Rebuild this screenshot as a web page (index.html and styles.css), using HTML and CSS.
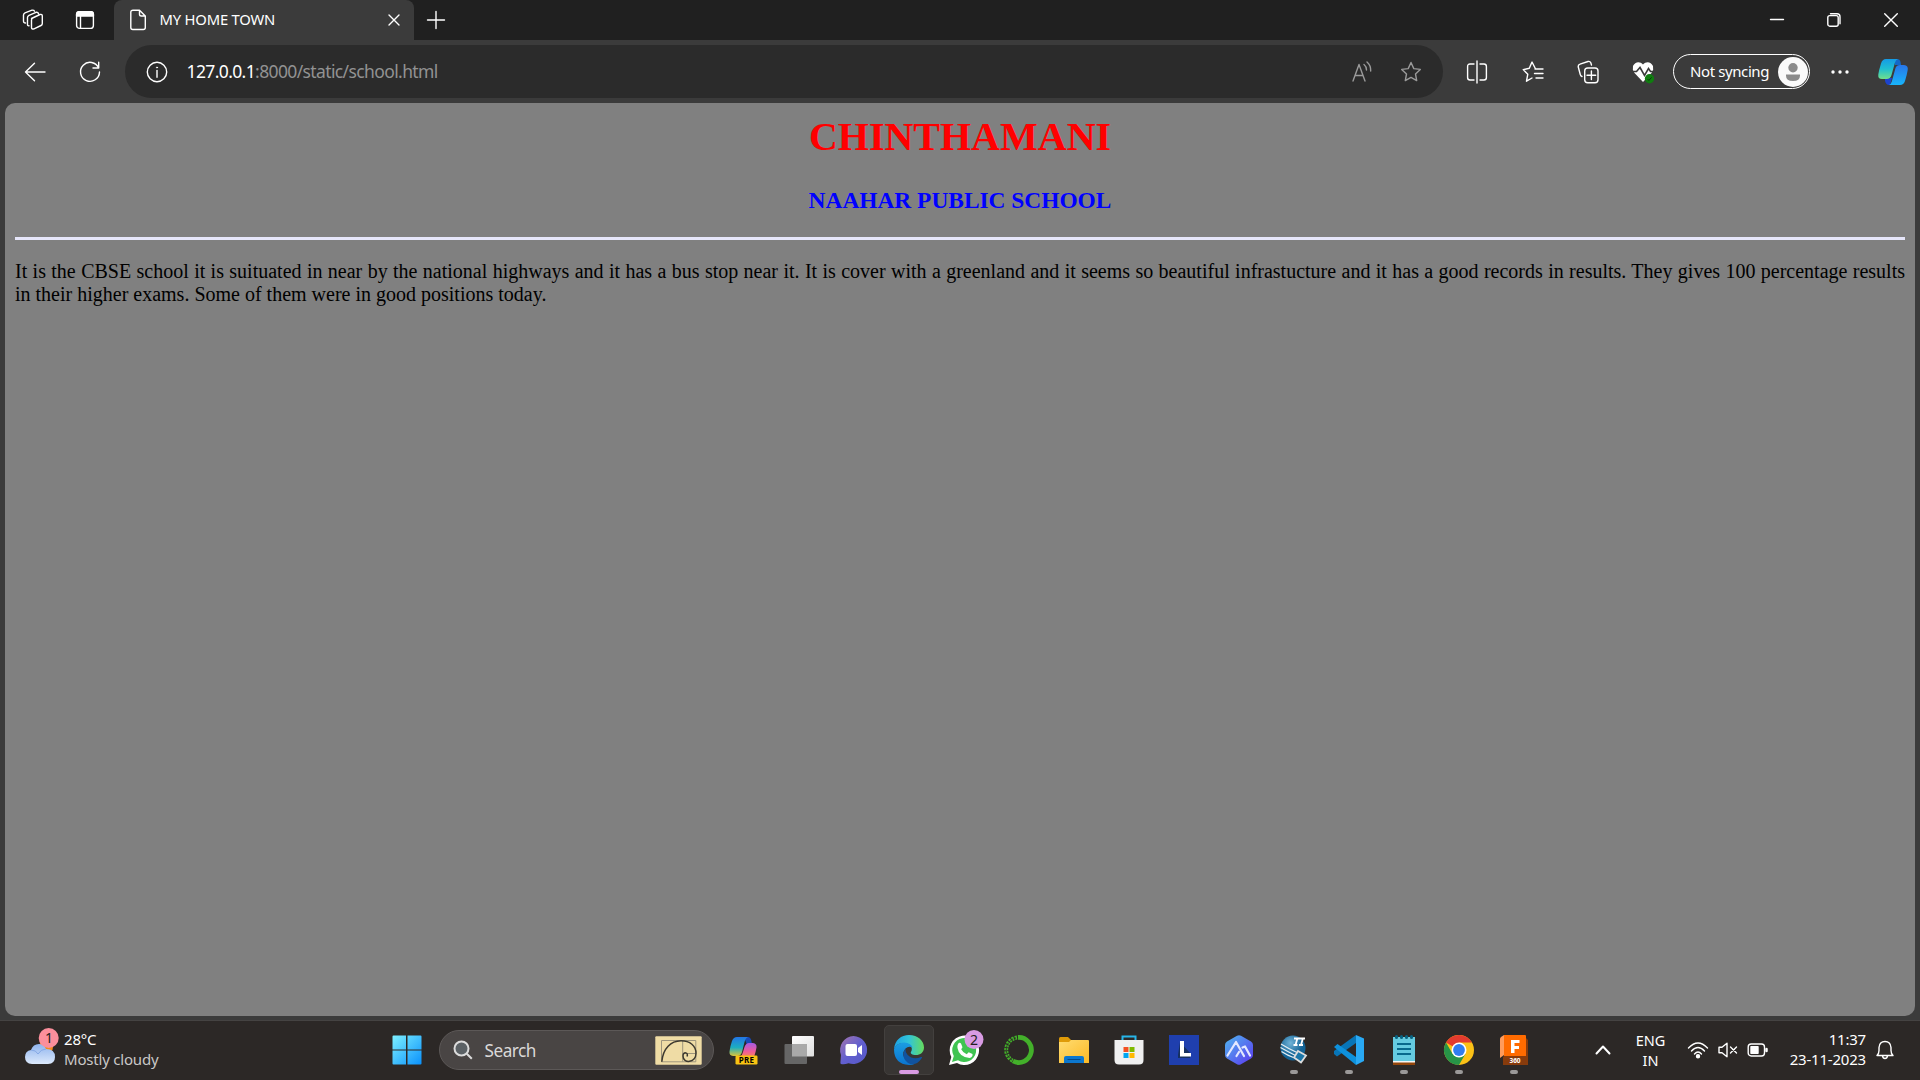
FILE: index.html
```html
<!DOCTYPE html>
<html lang="en">
<head>
<meta charset="utf-8">
<title>MY HOME TOWN</title>
<link rel="stylesheet" href="styles.css">
</head>
<body>
<div class="desktop">
  <header class="tabstrip">
    <button class="cell"><svg width="22" height="22" viewBox="0 0 22 22" class="line"><path d="M9.500 9.500 18 5.500Q20.300 5 20.300 7v7.500Q20.300 16 19 16.500L12 19.800Q9.500 20.500 9.500 18.500V11Q9.500 10 10.500 9.300M7 16.800Q5.500 17 5.500 15.500V8.500Q5.500 7 7 6.300L14 3.300Q16 3 16.500 4.500M3.500 14Q1.500 14 1.500 12V6Q1.500 4.500 3 3.800L10 1.200Q12 1 12.500 2.200"/></svg></button>
    <button class="cell"><svg width="20" height="20" viewBox="0 0 20 20" class="line"><rect x="1.600" y="1.600" width="16.800" height="16.800" rx="3"/><path d="M1.600 6V4q0-2.400 2.400-2.400h12q2.400 0 2.400 2.400v2z" fill="#fff"/><path d="M5.500 6v12"/></svg></button>
    <div class="tab">
      <svg width="18" height="22" viewBox="0 0 18 22" class="line"><path d="M4 1.200h6.500L16.300 7v11.500q0 2-2 2H3.800q-2 0-2-2V3.200q0-2 2.200-2zM10.500 1.200v4q0 1.800 1.800 1.800h4"/></svg>
      <span class="tab-title">MY HOME TOWN</span>
      <svg class="line tab-close" width="12" height="12" viewBox="0 0 12 12"><path d="m1 1 10 10M11 1 1 11"/></svg>
    </div>
    <button class="cell"><svg width="18" height="18" viewBox="0 0 18 18" class="line"><path d="M9 .5v17M.5 9h17"/></svg></button>
    <button class="cell window-minimize"><svg width="14" height="12" viewBox="0 0 14 12" class="line"><path d="M.5 5.500h13"/></svg></button>
    <button class="cell"><svg width="14" height="14" viewBox="0 0 14 14" class="line"><rect x=".8" y="2.600" width="10.400" height="10.600" rx="2"/><path d="M3.500.7H10q3 0 3 3v7"/></svg></button>
    <button class="cell"><svg width="14" height="14" viewBox="0 0 14 14" class="line"><path d="m.7.700 12.600 12.600M13.300.700.700 13.300"/></svg></button>
  </header>

  <nav class="toolbar">
    <button class="cell"><svg width="22" height="20" viewBox="0 0 22 20" class="line"><path d="M21 10H1.500M10.500 1.300 1.500 10l9 8.700"/></svg></button>
    <button class="cell"><svg width="22" height="22" viewBox="0 0 22 22" class="line"><path d="M19.700 7A9.500 9.500 0 1 0 20.500 11M19.700 1.300V7H14"/></svg></button>
    <div class="address">
      <svg width="22" height="22" viewBox="0 0 22 22" class="line"><circle cx="11" cy="11" r="9.700"/><path d="M11 9.500v6.700"/><circle cx="11" cy="6.500" r=".6" fill="#fff" stroke-width=".8"/></svg>
      <span class="url"><b>127.0.0.1</b>:8000/static/school.html</span>
      <svg class="line dim read" width="20" height="22" viewBox="0 0 20 22"><path d="m1 20 6-16.500L13 20M3.200 14.500h7.700M12 3.500q2.500 2 2.500 5.500M15 1q4 3.500 3.700 9"/></svg>
      <svg class="line dim" width="22" height="22" viewBox="0 0 22 22"><path d="m11 1.500 2.800 6.100 6.500.8-4.800 4.600 1.200 6.600L11 16.400l-5.700 3.200L6.500 13 1.700 8.400l6.500-.8z"/></svg>
    </div>
    <button class="cell split"><svg width="22" height="24" viewBox="0 0 22 24" class="line"><path d="M11 1v22M8 4H4Q1.600 4 1.600 6.500v11Q1.600 20 4 20h4M14 4h4q2.400 0 2.400 2.500v11Q20.400 20 18 20h-4"/></svg></button>
    <button class="cell"><svg width="22" height="22" viewBox="0 0 22 22" class="line"><path d="M13.600 8 10 1 7.300 7.300 1.200 8.600l4.600 4.600-1.300 7L10 17M13 8h8M12.500 12.500H21M14 17h7"/></svg></button>
    <button class="cell"><svg width="22" height="24" viewBox="0 0 22 24" class="line"><path d="M5 16.500Q3.600 16 3.200 14.300L1.200 6.800Q1 4.800 3 4.200L11 1.500q2-.5 2.800 1.300l.7 2.200"/><rect x="7.700" y="8" width="13.300" height="14.700" rx="3"/><path d="M14.400 11v8.500M10 15.300h8.700"/></svg></button>
    <button class="cell health"><svg width="22" height="24" viewBox="0 0 22 24"><path d="M11 22 2.500 13Q0 9.500 1 6C3 1.500 8 1 11 4.500 14 1 19 1.500 21 6q1 3.500-1.500 7z" fill="#fff"/><path d="M0 11.500h4.500L8 7.500l4.500 8 4-7 2 3H22" fill="none" stroke="#3b3b3b" stroke-width="1.600"/><circle cx="17.500" cy="18.800" r="4.700" fill="#107c10"/><path d="m15.500 19 1.400 1.400 2.700-3" stroke="#063f06" fill="none"/></svg></button>
    <div class="profile"><span>Not syncing</span><svg width="30" height="30" viewBox="0 0 30 30"><circle cx="15" cy="15" r="15" fill="#fafafa"/><circle cx="15" cy="10.800" r="4.700" fill="#8b8b8b"/><path d="M8 17.500h14v1q0 5.500-7 5.500t-7-5.500z" fill="#8b8b8b"/></svg></div>
    <button class="cell"><svg width="18" height="6" viewBox="0 0 18 6" fill="#fff"><circle cx="2" cy="3" r="1.700"/><circle cx="9" cy="3" r="1.700"/><circle cx="16" cy="3" r="1.700"/></svg></button>
    <button class="cell"><svg width="32" height="28" viewBox="0 0 32 28">
      <defs><linearGradient id="cpl" x1="0" y1="0" x2="0" y2="1"><stop offset="0" stop-color="#159be6"/><stop offset=".5" stop-color="#20bfd0"/><stop offset="1" stop-color="#70e08b"/></linearGradient><linearGradient id="cpr" x1="0" y1="0" x2="0" y2="1"><stop offset="0" stop-color="#2875e8"/><stop offset="1" stop-color="#18b5fb"/></linearGradient></defs>
      <path d="M18 1h2q3 0 3.500 3L24 7h-6z" fill="#1368c8"/><path d="M8 20h7l-2 7h-1q-3 0-4-4z" fill="#1d43cc"/>
      <path d="M9 1h12q-2.300.7-3 3.500L14.500 17q-1 4-5 4H5Q.7 21 1.300 16.500 2 12 4 5.500 5.300 1 9 1z" fill="url(#cpl)"/>
      <path d="M23 7h4q4.500.5 3.700 5-.7 4.500-2.700 11-1.300 4-5 4H12q2-.7 2.800-3.500L18.500 10q1-3 4.500-3z" fill="url(#cpr)"/></svg></button>
  </nav>

  <div class="viewport">
    <main class="page">
      <h1>CHINTHAMANI</h1>
      <h3>NAAHAR PUBLIC SCHOOL</h3>
      <hr>
      <p>It is the CBSE school it is suituated in near by the national highways and it has a bus stop near it. It is cover with a greenland and it seems so beautiful infrastucture and it has a good records in results. They gives 100 percentage results in their higher exams. Some of them were in good positions today.</p>
    </main>
  </div>

  <footer class="taskbar">
    <div class="weather">
      <svg width="36" height="38" viewBox="0 0 36 38"><defs><linearGradient id="cloud" x1="0" y1="0" x2="0" y2="1"><stop offset="0" stop-color="#8fb4ee"/><stop offset="1" stop-color="#dce9fb"/></linearGradient></defs><circle cx="22" cy="19" r="7" fill="#f58a1f"/><path d="M8 36q-7-.5-7-7 0-6 6-7 2-6 8-6 5 0 7 5 9 0 9 8 0 6.500-7 7z" fill="url(#cloud)"/><path d="M7 22q5 0 7 4 3-5 8-5" stroke="#86a9e5" fill="none"/><circle cx="24.700" cy="10" r="10" fill="#fb8f9c"/><text x="25" y="15" class="badge-text">1</text></svg>
      <div class="weather-text"><span>28°C</span><span class="muted">Mostly cloudy</span></div>
    </div>
    <svg class="start" width="30" height="30" viewBox="0 0 30 30"><defs><linearGradient id="win" x1="0" y1="0" x2="1" y2="1"><stop offset="0" stop-color="#7df0ff"/><stop offset="1" stop-color="#0a91fb"/></linearGradient></defs><path d="M1.500.5H14v14H.5V1.500q0-1 1-1zM15.500.5h13q1 0 1 1v13h-14zM.5 15.500H14v14H1.500q-1 0-1-1zM15.500 15.500h14v13q0 1-1 1h-13z" fill="url(#win)"/></svg>
    <div class="search">
      <svg width="20" height="20" viewBox="0 0 20 20" fill="none" stroke="#dcdcdc" stroke-width="2"><circle cx="8.500" cy="8.500" r="7" fill="#5b6165"/><path d="m13.800 13.800 5 5"/></svg>
      <span>Search</span>
      <svg width="47" height="29" viewBox="0 0 47 29"><rect x=".3" y=".3" width="46.400" height="28.400" rx="1" fill="#efdca5"/><g fill="none" stroke="#9e957c" stroke-width="1"><path d="M6.500 4.500h34.300v21.300H6.500zM27.700 4.500v21.300M27.700 17.500h13"/></g><path d="M6.800 25.800C8 12 16 5 26 4.800c9 0 15 5 15 12.500 0 10-13 10.500-13 2.700 0-5 6-3.500 4 .5" fill="none" stroke="#3d392f" stroke-width="1.500"/></svg>
    </div>
    <div class="apps">
      <div class="app"><svg width="30" height="30" viewBox="0 0 30 30"><defs><linearGradient id="pa" x1="0" y1="0" x2="0" y2="1"><stop offset="0" stop-color="#2375e6"/><stop offset=".55" stop-color="#1caec1"/><stop offset="1" stop-color="#dac33b"/></linearGradient><linearGradient id="pb" x1="0" y1="0" x2="0" y2="1"><stop offset="0" stop-color="#a45be4"/><stop offset=".6" stop-color="#ef5b99"/><stop offset="1" stop-color="#f6845b"/></linearGradient></defs><path d="M15 2h4q2.500.3 3.300 3.500L23 9l-5 1z" fill="#174ab8"/><path d="M8 2h11q-2.500 1-3.500 5L13 17q-1 4-5 4H4q-4-.5-3.500-4.500Q1.500 10 3 6q1.500-4 5-4z" fill="url(#pa)"/><path d="M20 8h4q4 .5 3.500 4.500Q27 16 25 22H11q2-1 3-5l1.500-5Q17 8 20 8z" fill="url(#pb)"/><rect x="6.500" y="20.500" width="22" height="9" rx="1.200" fill="#f8c313"/><text x="17.500" y="27.800" class="pre-text">PRE</text></svg></div>
      <div class="app"><svg width="30" height="30" viewBox="0 0 30 30"><defs><linearGradient id="tv" x1="0" y1="0" x2="1" y2="1"><stop offset="0" stop-color="#fff"/><stop offset="1" stop-color="#dedede"/></linearGradient></defs><rect x="8" y="1" width="22" height="20.500" rx="1" fill="url(#tv)"/><rect x=".5" y="9" width="22.500" height="20" rx="1" fill="#666"/><path d="M8 9h15v12.500H8z" fill="#a9a9a9"/></svg></div>
      <div class="app"><svg width="30" height="30" viewBox="0 0 30 30"><defs><linearGradient id="chat" x1="0" y1="0" x2="1" y2="1"><stop offset="0" stop-color="#a675ac"/><stop offset=".5" stop-color="#625fcf"/><stop offset="1" stop-color="#5658c7"/></linearGradient></defs><path d="M14.500 1a14 14 0 1 1-5 27.200Q5 30 2 29q-1-.5-.5-2.500L2 20A14 14 0 0 1 14.500 1z" fill="url(#chat)"/><rect x="6.500" y="9" width="11.500" height="12" rx="2" fill="#fff"/><path d="m19 13 4-3v10l-4-3z" fill="#fff"/></svg></div>
      <div class="app active"><svg width="30" height="30" viewBox="0 0 30 30"><defs><linearGradient id="ea" x1="0" y1="0" x2="1" y2="0"><stop offset="0" stop-color="#1ca2e5"/><stop offset=".5" stop-color="#32c4d8"/><stop offset="1" stop-color="#66dc5c"/></linearGradient><linearGradient id="eb" x1="0" y1="0" x2="0" y2="1"><stop offset="0" stop-color="#1b9de2"/><stop offset="1" stop-color="#0b74cf"/></linearGradient></defs><path d="M0 14C1 5 7 0 15 0c9 0 15 6 15 12.500 0 5-4 7.500-8 7.500-4 0-6-1.500-5-3 3-5-2-9-8-9Q3 8 0 14z" fill="url(#ea)"/><path d="M0 14Q3 7.500 10 7.500q7 .5 8.500 5-4-2-7 1-5 6 1 12 4 4 9 3-3 1.500-6.500 1.500Q0 29 0 14z" fill="url(#eb)"/><path d="M10.500 15q-3.500 8 3.500 13 8 4 14-5.300.5-1.200-1-.6-8 3.400-13.500-2.300-2.300-2.300-2-6z" fill="#11539f"/></svg></div>
      <div class="app"><svg width="36" height="36" viewBox="0 0 36 36"><path d="M3 33 5.300 25A14.700 14.700 0 1 1 11 31z" fill="#fff"/><path d="m6 30 1.800-6A12 12 0 1 1 12 28.300z" fill="#3fc451"/><path d="M12 12q1.500-2 3-.5l1.500 3.700-1.300 2q1.800 3.500 5.500 5l2-2 3.800 1.800q.5 3-3 4Q13 25 11.500 16q-.5-2 .5-4z" fill="#fff"/><circle cx="28" cy="7.500" r="9.500" fill="#d99be3"/><text x="28" y="12.500" class="badge-text">2</text></svg></div>
      <div class="app"><svg width="30" height="30" viewBox="0 0 30 30"><path d="M14 2.500A12.500 12.500 0 1 1 9 26" fill="none" stroke="#43b02a" stroke-width="4.800"/><path d="M13 2.500A12.500 12.500 0 0 0 9 26" fill="none" stroke="#43b02a" stroke-width="4" stroke-dasharray="2.200 1"/><path d="M12 3A12 12 0 0 0 8 25" fill="none" stroke="#2c2826" stroke-width="1" stroke-dasharray="1.500 1.500"/></svg></div>
      <div class="app"><svg width="30" height="30" viewBox="0 0 30 30"><defs><linearGradient id="fold" x1="0" y1="0" x2="1" y2="1"><stop offset="0" stop-color="#ffdc71"/><stop offset="1" stop-color="#fcb925"/></linearGradient></defs><path d="M0 3.500Q0 2 1.500 2H9l3 3v5H0z" fill="#df9b08"/><path d="M0 7h10l2-2h17q1 0 1 1v22H0z" fill="url(#fold)"/><path d="M5 28v-5q0-2 2-2h16q2 0 2 2v5z" fill="#0c77ce"/><path d="M8.500 24.500h13" stroke="#064a89"/></svg></div>
      <div class="app"><svg width="30" height="30" viewBox="0 0 30 30"><path d="M8.500 7V1.500h13V7" fill="none" stroke="#27b5e8" stroke-width="2"/><path d="M.5 5h29v20q0 4.500-4.500 4.500H5Q.5 29.500.5 25z" fill="#f0f0f0"/><path fill="#f25022" d="M9.500 12h5v5h-5z"/><path fill="#7fba00" d="M15.500 12h5v5h-5z"/><path fill="#00a4ef" d="M9.500 18h5v5h-5z"/><path fill="#ffb900" d="M15.500 18h5v5h-5z"/></svg></div>
      <div class="app"><svg width="30" height="30" viewBox="0 0 30 30"><path fill="#1f3fae" d="M0 0h30v30H0z"/><path d="m11 7-2 13v3h12l1-4z" fill="#16305f"/><path d="M11 6h4v12h7v3.500H11z" fill="#fff"/></svg></div>
      <div class="app"><svg width="30" height="30" viewBox="0 0 30 30"><defs><linearGradient id="hex" x1="0" y1="0" x2="1" y2="1"><stop offset="0" stop-color="#50b8ef"/><stop offset="1" stop-color="#5b36ef"/></linearGradient></defs><path d="M13 .8q2-1 4 0l10 5.700q2 1 2 3.500v10q0 2.500-2 3.500l-10 5.700q-2 1-4 0L3 23.500Q1 22.500 1 20V10q0-2.500 2-3.500z" fill="url(#hex)"/><path d="m3.500 20.500 8.500-13.500 8 14M12.500 21l2.500-4M18.500 12.500l2.500-1 5 9" fill="none" stroke="#e3e8ff" stroke-width="2.200" stroke-linecap="round" stroke-linejoin="round"/></svg></div>
      <div class="app running"><svg width="30" height="30" viewBox="0 0 30 30"><defs><radialGradient id="ball" cx=".4" cy=".3"><stop offset="0" stop-color="#72b4d8"/><stop offset="1" stop-color="#126294"/></radialGradient></defs><circle cx="14" cy="13" r="12.500" fill="url(#ball)"/><path d="M2 9q8 5 17 9M1.500 12.500q8 4.500 15 8M2.500 16.500q6 4 12 6" fill="none" stroke="#e3eef4" stroke-width="1.300"/><path d="m18.500 3-2 7M24 3l-2 7M15 3.500h11M14.500 10h4M20 10h4" stroke="#fff" stroke-width="1.800"/><path d="m19 16 8 4.500-5 7-7-5z" fill="#1b76a8" stroke="#ddd" stroke-width="1.800"/></svg></div>
      <div class="app running"><svg width="30" height="30" viewBox="0 0 30 30"><path d="M22 0v8L3 21.500 0 19v-3z" fill="#0875b7"/><path d="M0 12 3.500 9 22 22v8z" fill="#0e91dc"/><path d="m22 0 8 3.500v22.500L22 30z" fill="#29a9f4"/></svg></div>
      <div class="app running"><svg width="30" height="30" viewBox="0 0 30 30"><path d="M4 26h22v4H4z" fill="#93460b"/><path d="M4 25h22v2.500H4z" fill="#f5f5f5"/><path d="M4 2h22v24H4z" fill="#65cbe0"/><path d="M8 9h14M8 14h14M8 19h14" stroke="#08698c" stroke-width="2"/><path d="M7.500 1.500v1M12.500 1.500v1M17.500 1.500v1M22.500 1.500v1" stroke="#086381" stroke-width="3" stroke-linecap="round"/></svg></div>
      <div class="app running"><svg width="30" height="30" viewBox="0 0 30 30"><circle cx="15" cy="15" r="15" fill="#fbc116"/><path d="M15 15 2 7.500A15 15 0 0 1 28 7.500H15z" fill="#e33b2e"/><path d="M2 7.500A15 15 0 0 0 15 30l6.500-11.300L8.500 18.800z" fill="#279447"/><circle cx="15" cy="15" r="7.500" fill="#fff"/><circle cx="15" cy="15" r="5.900" fill="#307df0"/></svg></div>
      <div class="app running"><svg width="30" height="30" viewBox="0 0 30 30"><path d="M26 2 29 5v25H4v-8z" fill="#873b0c"/><path d="M5 0v20l-4 3V4q0-1 1-2z" fill="#ff9b5c"/><path d="M5 0h21q1 0 1 1v20H5z" fill="#ff6b00"/><path d="M12 5h8.500v3H15.500v3H20v3h-4.500v4H12z" fill="#fff"/><text x="16" y="28" class="fusion-text">360</text></svg></div>
    </div>
    <div class="tray">
      <svg width="16" height="10" viewBox="0 0 16 10" class="line thick"><path d="m1.500 8.500 6.500-7 6.500 7"/></svg>
      <span class="language">ENG<br>IN</span>
      <svg width="22" height="18" viewBox="0 0 22 18" class="line"><path d="M1.500 7q9.500-10 19 0M4.500 10q6.500-7 13 0M7.500 13q3.500-4 7 0"/><circle cx="11" cy="15.300" r="1.500" fill="#fff"/></svg>
      <svg width="20" height="16" viewBox="0 0 20 16" class="line"><path d="M1 5.300h3L9 1.200v13.600l-5-4.100H1zM12.500 5l6 6M18.500 5l-6 6"/></svg>
      <svg width="22" height="16" viewBox="0 0 22 16" class="line"><rect x="1.200" y="2" width="16.300" height="12" rx="3"/><path d="M4 4.800h7v6.400H4z" fill="#fff"/><path d="M19.500 7v2" stroke-width="2.500"/></svg>
      <div class="clock"><span>11:37</span><span>23-11-2023</span></div>
      <svg width="18" height="20" viewBox="0 0 18 20" class="line"><path d="M1 15.500q2-2 2-5V7.500Q3.500 1.500 9 1.500t6 6v3q0 3 2 5zM6.500 16q.5 2.500 2.500 2.500t2.500-2.500"/></svg>
    </div>
  </footer>
</div>
</body>
</html>
```
FILE: styles.css
```css
* { box-sizing: border-box; }

body {
  margin: 0;
  background: #3b3b3b;
}

svg {
  display: block;
  flex: none;
  overflow: visible;
}

button {
  border: 0;
  padding: 0;
  background: none;
}

.desktop {
  display: grid;
  grid-template-rows: 40px 63px 917px 60px;
  width: 1920px;
  height: 1080px;
  overflow: hidden;
  color: #fff;
  font-family: "Noto Sans", "Open Sans", sans-serif;
  font-size: 15px;
}

.line {
  fill: none;
  stroke: #fff;
  stroke-width: 1.4;
  stroke-linecap: round;
  stroke-linejoin: round;
}

.thick { stroke-width: 2; }
.dim { stroke: #9a9a9a; }

.cell {
  display: flex;
  align-items: center;
  justify-content: center;
}

.tabstrip {
  display: grid;
  grid-template-columns: 65px 40px 309px 43px 1fr 57px 58px;
  background: #202020;
}

.tab {
  display: flex;
  align-items: center;
  margin-left: 9px;
  padding: 0 14px 0 15px;
  border-radius: 8px 8px 0 0;
  background: #3b3b3b;
}

.tab-title {
  flex: 1;
  margin-left: 12.500px;
  padding-bottom: 2px;
  font-size: 14.800px;
  letter-spacing: -0.200px;
}

.window-minimize {
  justify-self: end;
  width: 57px;
}

.toolbar {
  display: grid;
  grid-template-columns: 70px 55px 1318px 62px 56px 54px 58px 137px 60px 46px;
  background: #3b3b3b;
}

.toolbar > .cell:nth-child(2) { padding-right: 15px; }
.toolbar > .split { padding-left: 5px; }
.toolbar > .health { padding-right: 2px; }

.address {
  display: flex;
  align-items: center;
  height: 53px;
  margin-top: 5px;
  padding: 0 21px;
  border-radius: 27px;
  background: #2b2b2b;
}

.url {
  flex: 1;
  margin-left: 18.500px;
  padding-bottom: 1px;
  color: #929292;
  font-size: 17.500px;
  letter-spacing: -0.620px;
}

.url b {
  color: #fff;
  font-weight: 400;
}

.read { margin-right: 28px; }

.profile {
  display: flex;
  align-items: center;
  justify-content: space-between;
  align-self: center;
  height: 35px;
  padding: 0 1px 0 16px;
  border: 1.500px solid #fff;
  border-radius: 18px;
  font-size: 15px;
  letter-spacing: -0.400px;
  white-space: nowrap;
}

.profile span { padding-bottom: 2px; }

.viewport {
  padding: 0 5px 4px;
  background: #3b3b3b;
}

.page {
  height: 913px;
  padding: 11px 10px 10px;
  border-radius: 10px;
  background: #808080;
  color: #000;
  font: 20px/23px "Liberation Serif", "Times New Roman", serif;
}

h1 {
  margin: 0;
  color: #f00;
  font-size: 40px;
  line-height: 46px;
  text-align: center;
}

h3 {
  margin: 26px 0 23px;
  color: #00f;
  font-size: 23.400px;
  line-height: 28px;
  text-align: center;
}

hr {
  height: 3px;
  margin: 0;
  border: 0;
  background: #e6e6fa;
}

p {
  margin: 20px 0 0;
  text-align: justify;
}

.taskbar {
  display: grid;
  grid-template-columns: 391px 48px 275px 1fr 350px;
  align-items: center;
  padding-bottom: 1px;
  border-top: 1px solid #454342;
  background: #2c2826;
}

.weather {
  display: flex;
  align-items: center;
  padding-left: 24px;
}

.weather svg { margin-top: -7px; }

.weather-text {
  display: flex;
  flex-direction: column;
  margin: 0 0 3px 4px;
  line-height: 20px;
  font-size: 15px;
  letter-spacing: -0.200px;
}

.muted { color: #c9c7c6; }

.start { margin-left: 1px; }

.badge-text {
  fill: #241e20;
  font-size: 14px;
  text-anchor: middle;
}

.search {
  display: flex;
  align-items: center;
  height: 40px;
  padding: 0 11px 0 13px;
  border: 1px solid #5c5857;
  border-radius: 20px;
  background: #494544;
  color: #dad9d8;
  font-size: 17.200px;
}

.search span {
  flex: 1;
  margin-left: 11.500px;
  letter-spacing: -0.500px;
}

.apps {
  display: grid;
  grid-template-columns: repeat(15, 55px);
  padding-left: 2.500px;
}

.app {
  position: relative;
  display: flex;
  align-items: center;
  justify-content: center;
  height: 50px;
}

.active {
  width: 50px;
  justify-self: center;
  border: 1px solid #43403e;
  border-radius: 5px;
  background: #383533;
}

.active::after,
.running::after {
  position: absolute;
  bottom: 1px;
  width: 8px;
  height: 4px;
  border-radius: 2px;
  background: #9b9998;
  content: "";
}

.active::after {
  bottom: 0;
  width: 20px;
  background: #d99be3;
}

.pre-text {
  font-size: 8px;
  font-weight: 700;
  letter-spacing: 0.300px;
  text-anchor: middle;
}

.fusion-text {
  fill: #fff;
  font-size: 6.500px;
  font-weight: 700;
  text-anchor: middle;
}

.tray {
  display: grid;
  grid-template-columns: 66px 46px 32px 27px 34px 91px 38px;
  align-items: center;
  justify-items: center;
}

.language {
  padding-right: 17px;
  line-height: 20px;
  font-size: 14.500px;
  text-align: center;
}

.clock {
  display: flex;
  flex-direction: column;
  justify-self: end;
  padding-bottom: 2px;
  line-height: 20px;
  letter-spacing: -0.200px;
  text-align: right;
}
```
